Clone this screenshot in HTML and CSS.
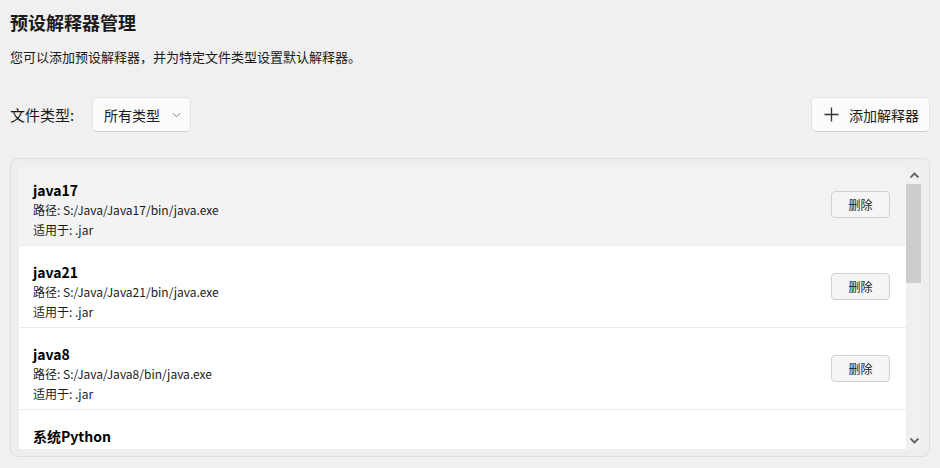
FILE: index.html
```html
<!DOCTYPE html>
<html lang="zh-CN">
<head>
    <meta charset="UTF-8">
    <meta name="viewport" content="width=device-width, initial-scale=1.0">
    <title>预设解释器管理</title>
    <link rel="stylesheet" href="styles.css">
</head>
<body>
    <h1 class="page-title">预设解释器管理</h1>
    <p class="page-desc">您可以添加预设解释器，并为特定文件类型设置默认解释器。</p>

    <div class="toolbar">
        <span class="filter-label">文件类型:</span>
        <button class="select-box">
            所有类型
            <svg class="chevron" width="10" height="6" viewBox="0 0 10 6"><path d="M1 1l4 4 4-4" fill="none" stroke="#777" stroke-width="1.1"/></svg>
        </button>
        <button class="add-btn">
            <svg width="15" height="15" viewBox="0 0 15 15"><path d="M7.5 0.5v14M0.5 7.5h14" stroke="#333" stroke-width="1.3"/></svg>
            添加解释器
        </button>
    </div>

    <div class="panel">
        <div class="list">
            <div class="list-inner">
                <div class="item hover">
                    <div class="item-info">
                        <div class="item-name">java17</div>
                        <div class="item-line">路径: S:/Java/Java17/bin/java.exe</div>
                        <div class="item-line">适用于: .jar</div>
                    </div>
                    <button class="del-btn">删除</button>
                </div>
                <div class="item">
                    <div class="item-info">
                        <div class="item-name">java21</div>
                        <div class="item-line">路径: S:/Java/Java21/bin/java.exe</div>
                        <div class="item-line">适用于: .jar</div>
                    </div>
                    <button class="del-btn">删除</button>
                </div>
                <div class="item">
                    <div class="item-info">
                        <div class="item-name">java8</div>
                        <div class="item-line">路径: S:/Java/Java8/bin/java.exe</div>
                        <div class="item-line">适用于: .jar</div>
                    </div>
                    <button class="del-btn">删除</button>
                </div>
                <div class="item last">
                    <div class="item-info">
                        <div class="item-name">系统Python</div>
                    </div>
                </div>
            </div>
        </div>
        <div class="scrollbar">
            <div class="scroll-arrow">
                <svg width="9" height="6" viewBox="0 0 9 6"><path d="M0.5 5.5l4-4 4 4" fill="none" stroke="#606060" stroke-width="1.8"/></svg>
            </div>
            <div class="scroll-track">
                <div class="scroll-thumb"></div>
            </div>
            <div class="scroll-arrow">
                <svg width="9" height="6" viewBox="0 0 9 6"><path d="M0.5 0.5l4 4 4-4" fill="none" stroke="#606060" stroke-width="1.8"/></svg>
            </div>
        </div>
    </div>
</body>
</html>
```

FILE: styles.css
```css
body {
    margin: 0;
    padding: 10px 10px 0 10px;
    background-color: #f0f0f0;
    font-family: "Noto Sans CJK SC", "Noto Sans", sans-serif;
    color: #1a1a1a;
}

.page-title {
    margin: 0;
    font-size: 18px;
    line-height: 24px;
    font-weight: bold;
}

.page-desc {
    margin: 13px 0 0 0;
    font-size: 13px;
    line-height: 20px;
}

.toolbar {
    display: flex;
    align-items: center;
    margin-top: 30px;
    height: 35px;
}

.filter-label {
    font-size: 15px;
    width: 82px;
}

.select-box,
.add-btn {
    display: flex;
    align-items: center;
    height: 35px;
    box-sizing: border-box;
    background: #fbfbfb;
    border: 1px solid #e3e3e3;
    border-bottom-color: #cfcfcf;
    border-radius: 5px;
    font-family: inherit;
    font-size: 14px;
    color: #1a1a1a;
    white-space: nowrap;
}

.select-box {
    width: 99px;
    padding: 0 9px 0 11px;
}

.chevron {
    margin-left: 12px;
}

.add-btn {
    margin-left: auto;
    width: 119px;
    padding: 0 0 0 12px;
    gap: 10px;
}

.panel {
    display: flex;
    margin-top: 26px;
    height: 299px;
    box-sizing: border-box;
    padding: 8px 7px 7px 8px;
    background: #eeeeee;
    border: 1px solid #dedede;
    border-radius: 8px;
}

.list {
    flex: 1;
    overflow: hidden;
    background: #fff;
}

.list-inner {
    margin-top: -3px;
}

.item {
    display: flex;
    align-items: center;
    height: 81px;
    padding: 0 16px 0 14px;
    background: #fff;
    border-bottom: 1px solid #ebebeb;
}

.item.hover {
    background: #f3f3f3;
}

.item.last {
    align-items: flex-start;
    height: 38px;
    border-bottom: none;
}

.item-info {
    flex: 1;
    padding-top: 11px;
}

.item.last .item-info {
    padding-top: 16px;
}

.item-name {
    font-size: 14px;
    line-height: 20px;
    font-weight: bold;
    color: #000;
}

.item-line {
    font-size: 12px;
    line-height: 20px;
}

.del-btn {
    width: 59px;
    height: 27px;
    box-sizing: border-box;
    background: #f5f5f5;
    border: 1px solid #d0d0d0;
    border-radius: 4px;
    font-family: inherit;
    font-size: 12px;
    color: #1a1a1a;
}

.scrollbar {
    display: flex;
    flex-direction: column;
    width: 16px;
    background: #f0f0f0;
}

.scroll-arrow {
    display: flex;
    align-items: center;
    justify-content: center;
    height: 16px;
}

.scroll-track {
    flex: 1;
    padding: 1px 1px 0 0;
}

.scroll-thumb {
    height: 99px;
    background: #cdcdcd;
}
```
